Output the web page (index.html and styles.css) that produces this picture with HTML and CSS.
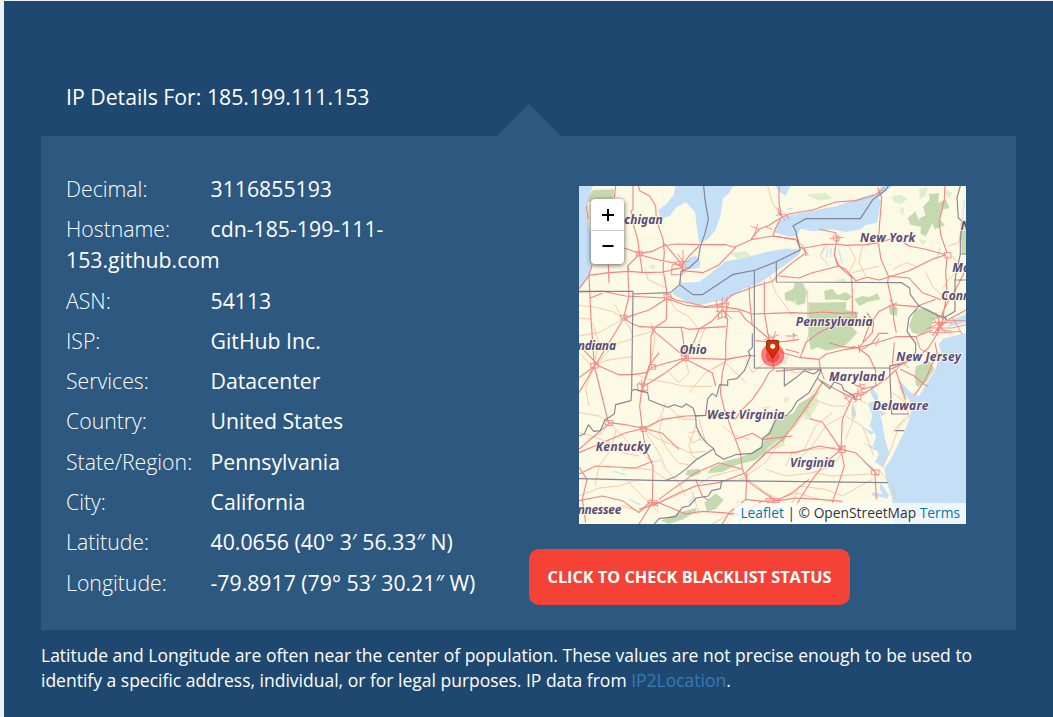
FILE: index.html
```html
<!DOCTYPE html>
<html lang="en">
<head>
<meta charset="utf-8">
<title>IP Details</title>
<link rel="stylesheet" href="styles.css">
</head>
<body>
<main class="page">
  <h1 class="heading">IP Details For: 185.199.111.153</h1>
  <section class="panel">
    <div class="details">
      <p class="row"><span class="label">Decimal:</span><span>3116855193</span></p>
      <p class="row"><span class="label">Hostname:</span><span>cdn-185-199-111-<br>153.github.com</span></p>
      <p class="row"><span class="label">ASN:</span><span>54113</span></p>
      <p class="row"><span class="label">ISP:</span><span>GitHub Inc.</span></p>
      <p class="row"><span class="label">Services:</span><span>Datacenter</span></p>
      <p class="row"><span class="label">Country:</span><span>United States</span></p>
      <p class="row"><span class="label">State/Region:</span><span>Pennsylvania</span></p>
      <p class="row"><span class="label">City:</span><span>California</span></p>
      <p class="row"><span class="label">Latitude:</span><span>40.0656 (40° 3′ 56.33″ N)</span></p>
      <p class="row"><span class="label">Longitude:</span><span>-79.8917 (79° 53′ 30.21″ W)</span></p>
    </div>
    <div class="side">
      <div class="map">
        <svg class="tiles" viewBox="0 0 1161 1014" preserveAspectRatio="none">
          <rect class="land" width="1161" height="1014"/>
          <!-- forests -->
          <g class="forest">
            <path d="M22 38L42 12L105 10L103 38L60 40L28 48Z"/>
            <path d="M617 320L642 310L648 290L672 292L684 318L678 352L655 358L638 346L618 342Z"/>
            <path d="M688 350L802 348L800 372L838 378L832 400L820 424L835 440L812 466L790 484L742 494L716 484L696 492L688 450Z"/>
            <path d="M736 314L760 308L776 328L800 318L820 332L806 344L770 340L738 342Z M826 340L850 330L870 334L896 322L904 340L866 348L842 360Z"/>
            <path d="M986 96L1010 76L1016 100L1040 88L1032 62L1052 42L1050 24L1080 22L1078 50L1100 40L1112 66L1092 70L1082 98L1098 118L1068 130L1060 112L1040 152L1024 142L1026 122L994 116Z"/>
            <path d="M1008 372L1040 366L1092 392L1064 402L1056 428L1030 448L1000 440L990 420Z M1010 542L1052 524L1066 550L1040 590L1014 604L1006 574Z"/>
            <path d="M724 612L690 636L662 652L640 684L590 700L560 752L548 780L510 804L478 816L440 824L396 846L386 862L430 858L474 836L530 822L570 790L614 772L630 730L668 690L700 650Z"/>
            <path d="M325 852L360 848L366 862L340 872L320 866Z M376 950L410 922L434 942L410 970L384 976Z M246 1004L300 980L350 966L354 976L312 1000L270 1014Z M930 360L956 366L954 390L932 384Z M1144 112L1161 100V205L1148 200Z"/>
          </g>
          <g class="grass">
            <path d="M676 680L712 628L720 650L690 698L674 702Z M612 640L632 630L622 652Z M640 350L650 340L654 356Z M560 790L600 760L620 778L590 790Z M480 878L508 868L500 882L476 884Z M545 664L580 660L560 674Z M40 180L62 178L58 192Z M940 30L966 26L984 40L966 54L944 48Z M450 200L500 196L520 214L480 222Z M680 26L740 20L760 38L720 44Z M600 530L612 512L632 504L620 536Z M205 240L230 236L224 252Z M930 160L950 156L944 170Z M770 282L800 276L796 292Z M290 690L310 686L300 704Z M1020 10L1046 4L1040 30L1022 40Z M1090 10L1120 20L1110 38Z M1020 160L1044 164L1030 180Z M960 70L976 64L972 90Z"/>
          </g>
          <!-- lakes and ocean -->
          <g class="water">
            <path d="M0 0H42L28 40L22 86L32 130L44 172L44 220L34 262L16 292L0 308Z"/>
            <path d="M290 0H462L450 22L432 36L424 90L410 132L386 160L362 174L354 128L348 78L320 48L292 64L272 90L244 100L238 72L262 54L284 26Z"/>
            <path d="M352 210L332 214L310 240L330 250L362 246L364 228Z"/>
            <path d="M304 270L308 290L360 288L392 264L440 226L500 216L560 198L620 188L662 190L664 202L626 232L584 262L540 292L500 306L460 330L434 346L400 348L362 358L330 350L284 326L280 318L300 300Z"/>
            <path d="M582 138L598 108L622 90L700 74L774 60L830 40L882 24L906 44L900 82L894 110L858 118L846 130L800 138L760 130L700 136L664 128L654 150L632 152Z"/>
            <path d="M908 0H940L918 18L896 38L888 28Z M588 0H634L620 30L600 16Z"/>
            <path d="M1161 384L1128 398L1104 422L1161 410V440L1092 458L1080 474L1086 498L1070 548L1046 588L1020 630L996 620L972 594L958 580L966 612L992 642L996 678L984 720L950 790L936 820L916 846L924 890L940 940L944 1014H1161Z"/>
            <path d="M876 600L896 626L900 676L910 710L918 760L930 800L912 844L888 828L900 806L882 776L892 750L872 720L880 690L866 652L888 646L874 620Z"/>
            <path d="M850 722L886 740L876 746Z M850 770L894 786L890 794Z M846 824L882 842L878 850Z M822 648L832 684L826 704L818 674Z M898 672L922 682L908 690Z M910 656L930 650L922 664Z M880 918L930 928L926 936L880 930Z M904 890L930 928L922 940L902 910Z"/>
          </g>
          <g class="lakes">
            <path d="M748 182l-6 34M756 186l-2 30M766 186l4 42M778 188l12 44M736 184l-12 22M1084 186l-10 34M1156 40l-6 70M1014 90l10 18M220 830l26-8M330 950l14-18M356 760l26 4M104 856l36 10M626 70l16-4M150 940l34 16"/>
            <path class="faint" d="M252 0V320M0 160H250M252 440H520M0 520H160M252 640V870M526 590V700M790 720V840M0 884H240M640 940V1014"/>
          </g>
          <!-- secondary roads -->
          <g class="minor">
            <path d="M0 358L50 364L100 376L134 398L170 388M0 450L60 440L130 400L150 420L162 452M40 410L60 470L46 530M108 356L130 398M60 530L100 520L160 512M0 500L40 540L20 610L30 660M50 540L84 500L120 470L160 460M162 452L210 440L262 404M168 562L206 580L270 590L310 600L400 602M250 680L230 712L196 732M262 552L300 590L330 560L318 520L360 470L380 424M216 410L228 460L214 540M330 620L380 560L430 530L470 512M266 330L290 370L330 392L360 430M200 250L206 280L260 306"/>
            <path d="M0 680L60 690L90 710L150 770L186 800L220 826M24 760L70 740L90 712M112 730L96 790L60 840L48 900M196 732L240 760L290 780L330 800L380 796M250 690L240 740L264 790L300 832L330 836M330 740L356 736L364 760L340 770L330 750M200 740L240 800L260 850L300 890L320 930M350 720L330 780L340 810L360 820M0 740L40 750L90 770L130 800L180 810M140 880L200 940L240 980M0 930L60 906L120 900L180 880M60 980L130 960L180 976L230 950M240 950L290 930L350 900L400 870L480 850M300 900L330 880L390 884M130 850L170 846L220 852L260 880M340 918L360 980M480 940L460 980L400 1014M260 650L250 680M270 664L310 700L350 700"/>
            <path d="M686 310V420M688 450L672 500M690 350L740 370L790 390M570 520L520 560L500 520M600 540L650 560L700 552M730 590L700 622L680 680L640 730L600 770L560 830L500 870M700 640L760 660L800 660L830 620M760 680L710 720L690 760L676 790L640 800L620 840M790 690L740 720L700 780L650 830M820 660L820 710L800 760M800 690L850 720L870 770L884 810M700 700L680 670L710 650M620 800L700 790L770 784M700 860L760 840L790 800M560 850L620 870L700 860L760 870L880 864M640 950L660 900L740 910L790 930L880 880M510 880L560 920L600 940L650 920L720 940M900 850L940 900L950 940M940 620L980 650L990 690L960 720L936 790L910 844M962 600L980 650M974 700L940 740M860 652L840 640L820 650"/>
            <path d="M570 260L590 320L620 360L640 390M740 180L724 210L750 240M810 180L830 220L810 260M850 180L840 230L860 270M900 240L860 250L820 260M942 250L980 230L1010 240M1140 250L1110 280L1090 310M1104 180L1140 170L1148 110M1120 210L1140 240L1161 250M1040 260L1060 300L1090 330M0 396L40 400M430 720L470 750L510 760M400 550L440 530L500 590M360 700L380 770M566 0L580 50L600 80"/>
          </g>
          <!-- highways -->
          <g class="roads">
            <path d="M162 0V70L156 76L162 112L176 160L182 205L190 258M178 0L182 14L212 30L230 60L232 100L252 160L256 200L252 250L264 320L262 400L228 424L216 450L214 530L206 560L190 604M110 0L106 36M22 60L28 100M136 186L180 202L220 196L252 180L290 174L360 176L440 176L466 184L520 160L582 150L644 160M182 206L240 222L290 232L312 246M30 268L90 260L150 256L200 260L252 258L306 246M0 308L28 272L40 236M88 236L90 290M180 206L146 240L150 330L134 396L156 412L182 422L240 424L310 424L330 430L400 424L440 422M146 240L150 256M256 172L310 236M310 236L330 210L360 180M312 254L372 260L420 236L470 184"/>
            <path d="M516 160L540 130L570 118L598 100L630 84L700 72L770 48L830 44L890 26L918 4M600 0L600 50L608 92L588 130L582 150M582 150L650 160L664 184L676 190L680 210M604 86L596 64M676 186L730 176L770 174L800 178L860 176L900 170L950 154L990 180L1040 190L1100 206L1060 220L990 254L932 272L900 282L864 274L830 284L800 250L776 238L766 206L774 158L770 140L720 130M896 4L908 36L902 110L898 170L906 220L928 270M926 270L990 276L1030 320L1068 334L1086 342M766 208L780 240L818 274L820 330L820 390M676 204L640 230L600 264L580 286L530 300L490 316L460 326L432 352L380 362L330 350L290 342L268 330M600 270L660 276L700 260L780 240"/>
            <path d="M0 318L70 316L140 330L260 336L320 358L380 364L430 362L480 370L520 384L580 382L640 380L690 382L730 378L790 382L830 380L832 396M30 270L36 400L46 540L76 660L88 710L140 716L190 726L250 742L300 790M70 322L34 336M134 396L210 372L260 340M0 478L60 540L120 566L162 566L200 560L220 544L260 532L320 516L440 520L510 508L530 510M48 540L0 620M48 540L90 470L130 404M0 575L48 540M320 516L310 440L306 424M320 516L340 480L360 430L400 404L430 372M320 516L260 560L190 604M320 520L400 560L410 600M320 515L230 440L216 424M432 368L446 400L440 470L440 520L430 560L424 620L436 670L460 736L484 800L490 850L504 880"/>
            <path d="M480 374L500 400L530 424L560 450L582 470L610 500L660 514L720 520L742 504L800 490L840 484L900 468L950 452L1010 452L1060 432M510 300L512 340L520 420M556 286V380L566 440L574 470M530 464L570 468L620 466L660 460M580 504L584 550L570 560L548 600L520 640L490 670L468 700L436 674M720 520L724 550L650 550L590 556M664 514L680 470L720 440L760 420L802 396L832 396M620 490L660 500M750 470L790 482L836 486L870 510L890 554L890 600L846 610M838 486L880 440L884 410L864 380M942 352L944 400L952 440M940 352L926 290L928 270M942 356L1010 362L1070 340M942 356L900 376L870 420L852 468"/>
            <path d="M928 442L900 442L880 470L850 490M932 550L980 530L1020 510L1050 484L1070 450L1086 420L1110 400L1161 372M1104 210L1100 260L1104 320L1094 380L1088 420M1104 200L1086 150L1080 110L1096 40L1098 0M1161 250L1130 310L1110 340L1086 390M950 552L920 580L890 600L850 626L820 634L790 700L786 790L830 800L860 830L888 858M940 536L946 470M950 552L966 600L980 640M1006 628L1040 580L1074 500L1068 470M964 550L1006 570L1036 596L1048 600M730 590L698 640L650 710L610 760L560 802L500 860L420 890L350 900L300 920L240 950L180 970M736 580L724 550M726 584L770 610L820 636M690 698L730 708L786 790M786 790L740 830L700 880L650 960M786 794L796 840L780 890L760 950M786 792L720 780L650 800L560 800L500 860M888 858L892 940"/>
            <path d="M0 790L90 712M0 800L70 770L140 740L190 728M188 612L182 660L190 730L200 790L222 840L220 950L180 1014M188 730L250 700L320 690L380 688M188 612L210 540L240 500M222 826L170 846L50 840L0 864M0 844L24 880L10 940L20 1010M0 944L70 930L130 944L180 980L210 950L240 950L320 984L370 976L430 980L480 986M350 880L370 930L390 944M240 940L300 896L350 860L420 830L490 850M504 860L500 940L550 946L600 944L650 936L720 940L790 946M500 880L540 910L592 944L640 920L690 880M500 940L450 980L430 1014M550 944L500 980L480 1014M470 760L520 742L550 760L640 750"/>
            <path class="thin" d="M280 236H310V266H276ZM284 228L330 226M312 192V250M296 204L320 238M276 250L326 244M300 230L318 262M172 196H190V210H172ZM254 326H276V342H258ZM124 388H144V402H128ZM412 344L420 400M430 334L428 396M444 332L440 400M410 376H480M410 360L450 350L440 380L460 400M414 400L444 390M34 532H58V546H36ZM306 506H328V524H310ZM174 594H206V614H178ZM180 588L200 620M188 580L190 620M76 704H102V718H80ZM182 722H202V736H186ZM216 536H230V550H218ZM780 780H798V800H780ZM772 774L800 796M774 790L800 780M876 852H900V866H878ZM880 846L898 870M762 150H780V164H766ZM752 158L794 154M644 156L672 180L684 204M652 148L660 168M670 182L688 210M590 88L620 84L630 100M594 78L620 104M514 120L540 130M524 154L536 114M580 130L560 122M564 440L594 470M556 462L600 446M590 436L576 480M620 450H650M644 440V460M640 444L656 450M1050 426H1120L1161 416M1060 410H1120M1050 440H1104L1146 436M1060 396L1100 440M1080 390L1076 450M1100 390L1060 450M1070 380L1090 430M1040 430L1090 410M1070 430L1120 436M1060 450L1100 400M1104 404L1160 404M1120 394L1150 446M930 540L980 528M940 550L990 520M950 554L970 530M960 520L990 546M830 600L860 594M836 620L860 600M826 624H846V640H822ZM838 606L830 650M802 628L860 618M842 590L850 620M822 594L860 610M932 340L952 370M930 360L956 350M1096 200H1116V216H1098ZM560 938H600V950H564ZM570 932L592 956M206 944H236V958H210ZM212 938L238 964M790 620L812 650M796 640L820 626M820 480L850 490M838 476L842 500M900 456L890 480M1010 450L1024 490L1050 500"/>
          </g>
          <!-- state and national borders -->
          <g class="border">
            <path d="M374 0L378 40L388 100L378 142L364 182L358 220L330 246L306 256L302 296L342 326L370 326L460 266L530 252L590 228L664 192L654 154L650 134L642 120L680 98H844L882 40L920 12L928 0"/>
            <path d="M0 316H162L158 614L168 610L188 616L206 620L210 642L240 654L266 664L286 656L308 664L322 654L342 666L350 690L380 688L386 638L400 622L412 632L422 596L446 598L446 582L474 578L496 554L514 510L508 496L520 484V442M162 324L274 320L302 296M526 252V546H932L934 540L964 534M592 228V288L968 290L992 306L994 326L1020 360L1092 396M1020 360L990 394L984 436L1010 472L1010 500L984 516M932 546L938 684H990M948 734H976"/>
            <path d="M158 614L156 644L110 656L106 684L78 702L64 734L44 736L28 716L16 744L0 750M350 690L352 722L366 750L384 772L404 788L376 806L350 822L320 850L290 872L256 884L0 878M404 788L410 804L434 820L470 806L520 802L548 784L552 756L572 742L590 700L626 686L640 670L654 646L690 620L714 578L728 550M616 546V600L652 574L676 554L704 564L724 550M716 578L752 608L766 588L788 596L794 612L820 626L830 640M256 884H428L926 890M428 884L424 908L398 914L388 930L352 936L330 960L310 964L290 992L240 998L226 1014M1144 0L1134 34L1138 96L1150 106L1144 160V204H1161M1144 204L1128 280V376L1094 396M1128 282H1161M1090 388L1104 402"/>
          </g>
          <g class="names">
            <text x="136" y="115" textLength="115">chigan</text>
            <text x="843" y="169" textLength="166">New York</text>
            <text x="1145" y="131">N</text>
            <text x="1120" y="259">Ma</text>
            <text x="1087" y="343">Conn</text>
            <text x="650" y="421" textLength="231">Pennsylvania</text>
            <text x="-4" y="493" textLength="115">ndiana</text>
            <text x="302" y="504" textLength="81">Ohio</text>
            <text x="952" y="524" textLength="194">New Jersey</text>
            <text x="750" y="584" textLength="167">Maryland</text>
            <text x="881" y="673" textLength="167">Delaware</text>
            <text x="384" y="698" textLength="232">West Virginia</text>
            <text x="50" y="796" textLength="164">Kentucky</text>
            <text x="633" y="844" textLength="134">Virginia</text>
            <text x="-4" y="985" textLength="131">nnessee</text>
          </g>
          <!-- location marker -->
          <circle class="halo" cx="581" cy="507" r="35"/>
          <circle class="halo" cx="581" cy="509" r="21"/>
          <path class="pin" d="M563 466Q563 463 567 463H595Q599 463 599 467V489Q598 494 592 499L581 517L570 499Q563 493 563 489Z"/>
          <circle class="hole" cx="581" cy="481" r="7.5"/>
        </svg>
        <div class="zoom">
          <span class="zoom-button"><svg viewBox="0 0 14 14"><path d="M1 7H13M7 1V13"/></svg></span>
          <span class="zoom-button"><svg viewBox="0 0 14 14"><path d="M1.5 7H12.5"/></svg></span>
        </div>
        <div class="credit"><a>Leaflet</a> | © OpenStreetMap <a>Terms</a></div>
      </div>
      <button class="check">CLICK TO CHECK BLACKLIST STATUS</button>
    </div>
  </section>
  <p class="note">Latitude and Longitude are often near the center of population. These values are not precise enough to be used to<br>identify a specific address, individual, or for legal purposes. IP data from <a>IP2Location</a>.</p>
</main>
</body>
</html>
```

FILE: styles.css
```css
* { box-sizing: border-box; }
body {
  margin: 0;
  padding: 1px 0 0 4px;
  height: 717px;
  overflow: hidden;
  background: #eef2f6;
  color: #fff;
  font-family: "Open Sans", sans-serif;
}
.page {
  height: 716px;
  padding: 80px 37px 0;
  background: #1f4870;
}
.heading {
  margin: 0;
  padding-left: 25px;
  height: 55px;
  font-size: 21.26px;
  line-height: 31px;
  font-weight: 400;
}
.panel {
  position: relative;
  display: flex;
  height: 494px;
  padding: 37px 50px 0 25px;
  background: #2d587f;
}
.panel::before {
  content: "";
  position: absolute;
  left: 456px;
  top: -32px;
  width: 64px;
  height: 32px;
  background: #2d587f;
  clip-path: polygon(50% 0, 100% 100%, 0 100%);
}
.details { width: 463px; }
.row {
  margin: 0 0 9.3px;
  font-size: 21.26px;
  line-height: 31px;
  font-weight: 400;
}
.label {
  display: inline-block;
  width: 144.5px;
  font-weight: 300;
}
.side { padding-top: 13px; }
.map {
  position: relative;
  width: 387px;
  height: 338px;
  margin-left: 50px;
  overflow: hidden;
}
.tiles { display: block; width: 387px; height: 338px; }
.land { fill: #fcfae5; }
.forest { fill: #c5d9b0; }
.grass { fill: #e0edcd; }
.water { fill: #c5dff6; }
.lakes { fill: none; stroke: #cfe3f3; stroke-width: 4; }
.faint { stroke-width: 1; opacity: .7; }
.minor { fill: none; stroke: #f6bd9c; stroke-width: 2.8; stroke-linejoin: round; opacity: .85; }
.roads { fill: none; stroke: #f28482; stroke-width: 3.3; stroke-linejoin: round; }
.thin { stroke-width: 2.6; }
.border { fill: none; stroke: #7d788c; stroke-width: 3.4; stroke-linejoin: round; opacity: .9; }
.names {
  font: italic 700 36px "Noto Sans", sans-serif;
  fill: #5a4a7c;
  stroke: #fcfae5;
  stroke-opacity: .8;
  stroke-width: 6;
  paint-order: stroke;
}
.halo { fill: #fa2a35; fill-opacity: .6; }
.pin { fill: #d63200; stroke: #8c2507; stroke-width: 3; }
.hole { fill: #fff; }
.zoom {
  position: absolute;
  left: 12px;
  top: 13px;
  width: 33px;
  border-radius: 4px;
  background: #fff;
  box-shadow: 0 1px 5px rgba(0, 0, 0, .65);
}
.zoom-button {
  display: flex;
  align-items: center;
  justify-content: center;
  height: 32px;
  border-bottom: 1px solid #ccc;
}
.zoom-button + .zoom-button { height: 33px; border: 0; padding-bottom: 3px; }
.zoom-button svg { width: 14px; height: 14px; margin-left: 1px; fill: none; stroke: #000; stroke-width: 2; }
.credit {
  position: absolute;
  right: 0;
  bottom: 0;
  height: 21px;
  padding: 0 6px;
  background: rgba(255, 255, 255, .7);
  color: #333;
  font-size: 13.8px;
  line-height: 20px;
  white-space: nowrap;
}
.credit a { color: #0078a8; }
.check {
  display: block;
  width: 321px;
  height: 56px;
  margin-top: 25px;
  padding: 0;
  border: 0;
  border-radius: 10px;
  background: #f44336;
  color: #fff;
  font: 700 16.25px "Open Sans", sans-serif;
  white-space: nowrap;
}
.note {
  margin: 13px 0 0;
  font-size: 17.51px;
  line-height: 25px;
  white-space: nowrap;
}
.note a { color: #337ab7; }
```
